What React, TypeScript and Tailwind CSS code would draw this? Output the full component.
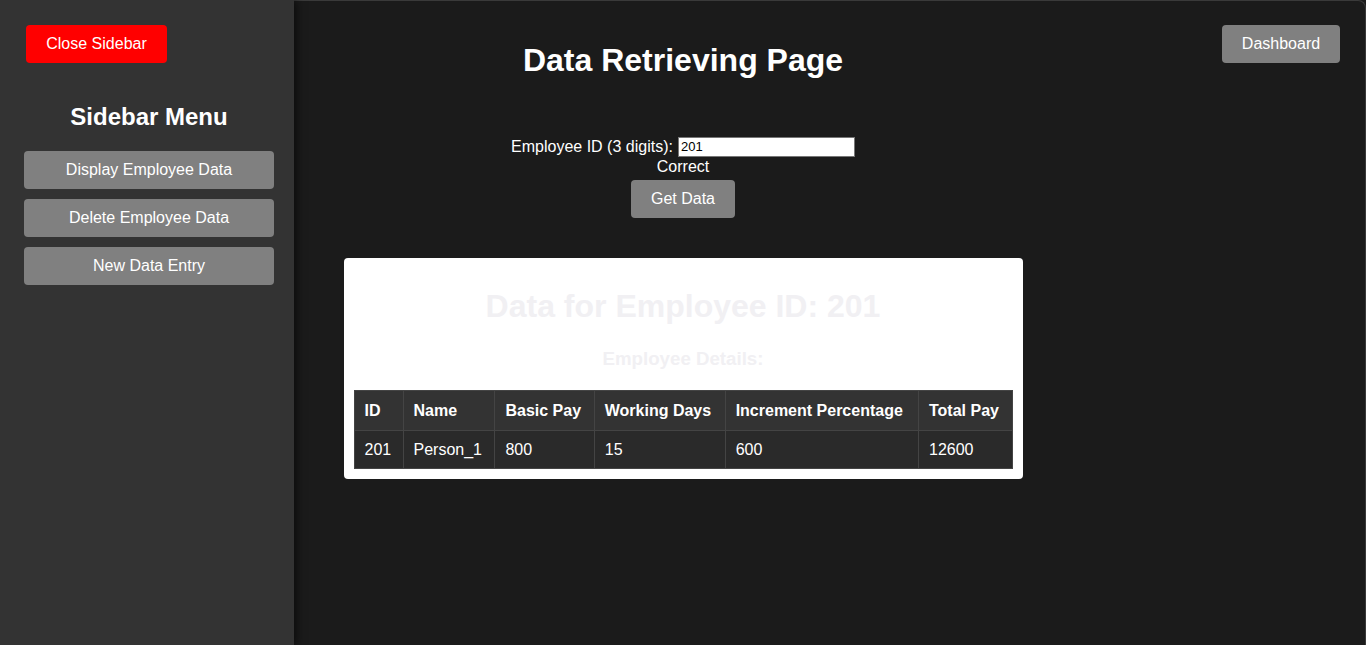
import { useState } from "react";

const rows = [
  { id: 201, name: "Person_1", basic: 800, days: 15, inc: 600, total: 12600 },
];

export default function App() {
  const [empId, setEmpId] = useState("201");

  return (
    <div
      className="relative h-[645px] w-[1366px] overflow-hidden bg-[#1b1b1b] text-white"
      style={{ fontFamily: '"Liberation Sans", Arial, sans-serif' }}
    >
      {/* window frame */}
      <div className="pointer-events-none absolute inset-0 rounded-tr-[8px] border-t border-r border-[#3a3a3a]" />

      {/* Sidebar */}
      <aside className="absolute left-0 top-0 z-10 flex h-full w-[294px] flex-col items-start bg-[#333333] pl-[24px] shadow-[3px_0_8px_rgba(0,0,0,0.55)]">
        <button className="ml-[2px] mt-[25px] h-[38px] w-[141px] rounded-[4px] bg-[#ff0000] text-[16px] text-white">
          Close Sidebar
        </button>

        <h2 className="mt-[40px] w-[250px] text-center text-[24px] font-bold leading-[28px]">Sidebar Menu</h2>

        {/* Menu */}
        <div className="mt-[20px] flex w-[250px] flex-col gap-[10px]">
          {["Display Employee Data", "Delete Employee Data", "New Data Entry"].map((label) => (
            <button
              key={label}
              className="h-[38px] w-full rounded-[4px] bg-[#808080] text-[16px] text-white"
            >
              {label}
            </button>
          ))}
        </div>
      </aside>

      <button className="absolute right-[26px] top-[25px] h-[38px] w-[118px] rounded-[4px] bg-[#808080] text-[16px] text-white">
        Dashboard
      </button>

      {/* Main */}
      <main className="flex flex-col items-center pt-[42px]">
        <h1 className="text-[32px] font-bold leading-[37px]">Data Retrieving Page</h1>

        <div className="mt-[58px] flex items-center text-[16px] leading-[20px]">
          <label htmlFor="emp">Employee ID (3 digits):</label>
          <input
            id="emp"
            value={empId}
            onChange={(e) => setEmpId(e.target.value)}
            className="ml-[5px] h-[20px] w-[177px] border border-[#767676] bg-white px-[2px] text-[13px] text-black outline-none"
          />
        </div>
        <p className="mt-[1px] text-[16px] leading-[18px]">Correct</p>

        <button className="mt-[4px] h-[38px] w-[104px] rounded-[4px] bg-[#808080] text-[16px] text-white">
          Get Data
        </button>

        {/* Result card */}
        <div className="mt-[40px] flex w-[679px] flex-col items-center rounded-[4px] bg-white p-[10px]">
          <h2 className="mt-[20px] text-[32px] font-bold leading-[37px] text-[#f1f0f3]">
            Data for Employee ID: {empId}
          </h2>
          <h3 className="mt-[23px] text-[18.7px] font-bold leading-[21px] text-[#f1f0f3]">
            Employee Details:
          </h3>

          <table className="mt-[21px] w-[659px] border-collapse text-left text-[16px]">
            <thead>
              <tr className="bg-[#333333]">
                {["ID", "Name", "Basic Pay", "Working Days", "Increment Percentage", "Total Pay"].map((h) => (
                  <th
                    key={h}
                    className="h-[40px] border border-[#444444] px-[10px] font-bold"
                  >
                    {h}
                  </th>
                ))}
              </tr>
            </thead>
            <tbody>
              {rows.map((r) => (
                <tr key={r.id} className="bg-[#2a2a2a]">
                  {[r.id, r.name, r.basic, r.days, r.inc, r.total].map((v, i) => (
                    <td key={i} className="h-[38px] border border-[#444444] px-[10px]">
                      {v}
                    </td>
                  ))}
                </tr>
              ))}
            </tbody>
          </table>
        </div>
      </main>
    </div>
  );
}
